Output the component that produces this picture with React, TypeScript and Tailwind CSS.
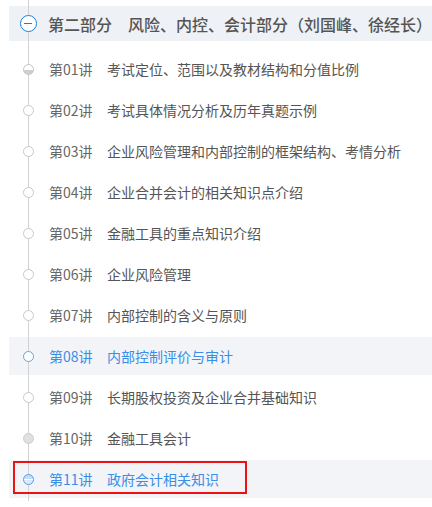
import React from 'react';

type Lesson = {
  no: string;
  title: string;
  dot: 'empty' | 'half' | 'gray' | 'blue' | 'blueFill';
  active?: boolean;
  marked?: boolean;
};

const lessons: Lesson[] = [
  { no: '第01讲', title: '考试定位、范围以及教材结构和分值比例', dot: 'half' },
  { no: '第02讲', title: '考试具体情况分析及历年真题示例', dot: 'empty' },
  { no: '第03讲', title: '企业风险管理和内部控制的框架结构、考情分析', dot: 'empty' },
  { no: '第04讲', title: '企业合并会计的相关知识点介绍', dot: 'empty' },
  { no: '第05讲', title: '金融工具的重点知识介绍', dot: 'empty' },
  { no: '第06讲', title: '企业风险管理', dot: 'empty' },
  { no: '第07讲', title: '内部控制的含义与原则', dot: 'empty' },
  { no: '第08讲', title: '内部控制评价与审计', dot: 'blue', active: true },
  { no: '第09讲', title: '长期股权投资及企业合并基础知识', dot: 'empty' },
  { no: '第10讲', title: '金融工具会计', dot: 'gray' },
  { no: '第11讲', title: '政府会计相关知识', dot: 'blueFill', active: true, marked: true },
];

const dotClass = {
  empty: 'bg-white border border-[#c9c9c9]',
  half: 'border border-[#c4c4c4] bg-[linear-gradient(to_bottom,#ffffff_50%,#cfcfcf_50%)]',
  gray: 'bg-[#e0e0e0] border border-[#cdcdcd]',
  blue: 'bg-white border-[1.5px] border-[#5aa6f3]',
  blueFill: 'border-[1.5px] border-[#4f9ff0] bg-[linear-gradient(to_bottom,#c4def9_45%,#ffffff_50%,#dbeafc_60%)]',
};

const Dot: React.FC<{ kind: Lesson['dot'] }> = ({ kind }) => (
  <span className={`relative z-[2] block w-[11px] h-[11px] rounded-full box-border ${dotClass[kind]}`} />
);

export default function App() {
  return (
    <div
      className="relative w-[432px] h-[507px] bg-white overflow-hidden"
      style={{ fontFamily: '"Noto Sans CJK SC", "Microsoft YaHei", sans-serif' }}
    >
      {/* timeline line */}
      <div className="absolute left-[28px] top-0 w-px h-[501px] bg-[#d2d2d2] z-[1]" />

      <div className="mt-[6px] ml-[9px] h-[35px] bg-[#eef1f5] flex items-center pl-[11px]">
        <span className="relative z-[2] w-[17px] h-[17px] rounded-full border-[1.5px] border-[#1f7fd8] bg-white flex items-center justify-center box-border">
          <span className="block w-[8px] h-[1.5px] bg-[#1f7fd8]" />
        </span>
        <span className="ml-[11px] text-[16px] leading-none text-[#555] font-medium whitespace-nowrap">
          第二部分　风险、内控、会计部分（刘国峰、徐经长）
        </span>
      </div>

      <div className="pt-[9px] flex flex-col gap-[3px]">
        {lessons.map((l) => (
          <div
            key={l.no}
            className={`relative ml-[9px] h-[38px] flex items-center pl-[14px] ${l.active ? 'bg-[#f2f4f7]' : ''}`}
          >
            <Dot kind={l.dot} />
            <span
              className={`ml-[15px] w-[58px] text-[14px] leading-none whitespace-nowrap ${
                l.active ? 'text-[#3a8ee6]' : 'text-[#666]'
              }`}
            >
              {l.no}
            </span>
            <span
              className={`text-[14px] leading-none whitespace-nowrap ${
                l.active ? 'text-[#3a8ee6]' : 'text-[#555]'
              }`}
            >
              {l.title}
            </span>
            {l.marked && (
              <div className="absolute left-[4px] top-[1px] w-[234px] h-[33px] border-2 border-[#ee1111] z-[3]" />
            )}
          </div>
        ))}
      </div>
    </div>
  );
}
